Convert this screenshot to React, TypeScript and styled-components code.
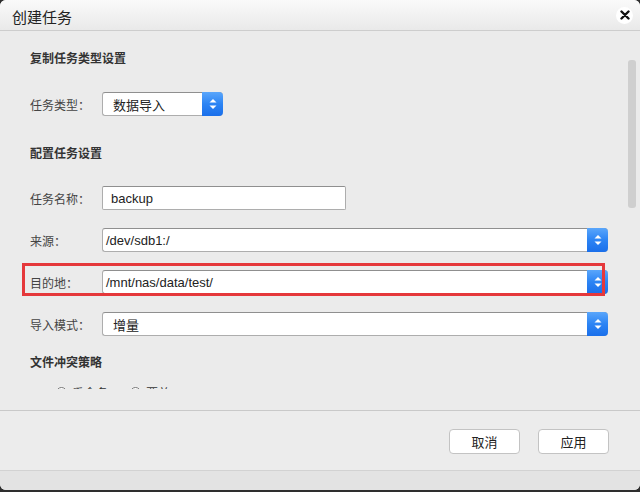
import styled, { createGlobalStyle } from "styled-components";

const GlobalStyle = createGlobalStyle`
  html, body {
    margin: 0;
    padding: 0;
    background: #2e2e2e;
  }
  body {
    font-family: "Liberation Sans", "Noto Sans CJK SC", sans-serif;
    color: #333;
  }
`;

type Field = {
  label: string;
  value: string;
  kind: "input" | "select";
  width?: number;
  indent?: number;
  highlight?: boolean;
};

const FIELDS: Field[] = [
  { label: "任务名称：", value: "backup", kind: "input", width: 244, indent: 8 },
  { label: "来源：", value: "/dev/sdb1:/", kind: "select", indent: 3 },
  { label: "目的地：", value: "/mnt/nas/data/test/", kind: "select", indent: 3, highlight: true },
  { label: "导入模式：", value: "增量", kind: "select", indent: 10 },
];

function SpinArrows() {
  return (
    <svg width="8" height="12" viewBox="0 0 8 12">
      <path d="M4 1 L7.5 4.6 H0.5 Z" fill="#fff" />
      <path d="M4 11 L7.5 7.4 H0.5 Z" fill="#fff" />
    </svg>
  );
}

function Select({ value, width, indent }: { value: string; width?: number; indent?: number }) {
  return (
    <SelectBox $width={width}>
      <FieldText $indent={indent ?? 5}>{value}</FieldText>
      <ArrowButton>
        <SpinArrows />
      </ArrowButton>
    </SelectBox>
  );
}

function App() {
  return (
    <>
      <GlobalStyle />
      <Dialog>
        <TitleBar>
          <Title>创建任务</Title>
          <CloseButton aria-label="close">
            <svg width="10" height="10" viewBox="0 0 10 10">
              <path d="M1.5 1.5 L8.5 8.5 M8.5 1.5 L1.5 8.5" stroke="#111" strokeWidth="2.4" strokeLinecap="round" />
            </svg>
          </CloseButton>
        </TitleBar>

        <Body>
          <ScrollArea>
            <Heading $top={17}>复制任务类型设置</Heading>
            <Row $top={24}>
              <Label>任务类型：</Label>
              <Select value="数据导入" width={121} indent={10} />
            </Row>

            <Heading $top={27}>配置任务设置</Heading>
            {FIELDS.map((f, i) => (
              <Row key={f.label} $top={i === 0 ? 23 : 18}>
                <Label>{f.label}</Label>
                {f.kind === "input" ? (
                  <InputBox $width={f.width}>
                    <FieldText $indent={f.indent ?? 5}>{f.value}</FieldText>
                  </InputBox>
                ) : (
                  <Select value={f.value} indent={f.indent} />
                )}
                {f.highlight && <Highlight />}
              </Row>
            ))}

            <Heading $top={16}>文件冲突策略</Heading>
            <RadioRow>
              <RadioOption>
                <RadioDot />
                重命名
              </RadioOption>
              <RadioOption>
                <RadioDot />
                覆盖
              </RadioOption>
            </RadioRow>
          </ScrollArea>
          <ScrollThumb />
        </Body>

        <Footer>
          <FooterButton>取消</FooterButton>
          <FooterButton>应用</FooterButton>
        </Footer>
        <BottomStrip />
      </Dialog>
    </>
  );
}

const Dialog = styled.div`
  width: 640px;
  height: 490px;
  display: flex;
  flex-direction: column;
  background: #ebebeb;
  border-radius: 6px;
  overflow: hidden;
`;

const TitleBar = styled.div`
  height: 30px;
  flex-shrink: 0;
  display: flex;
  align-items: center;
  justify-content: space-between;
  padding: 0 7px 0 12px;
  background: linear-gradient(#fafafa, #e9e9e9);
  border-bottom: 1px solid #cdcdcd;
`;

const Title = styled.div`
  font-family: "Noto Sans CJK SC", sans-serif;
  font-size: 15px;
  color: #222;
  padding-top: 2px;
`;

const CloseButton = styled.div`
  width: 17px;
  height: 17px;
  border-radius: 50%;
  background: #fff;
  display: flex;
  align-items: center;
  justify-content: center;
`;

const Body = styled.div`
  position: relative;
  height: 379px;
  flex-shrink: 0;
  border-bottom: 1px solid #c9c9c9;
`;

const ScrollArea = styled.div`
  height: 358px;
  overflow: hidden;
  padding: 0 32px 0 30px;
  display: flex;
  flex-direction: column;
`;

const ScrollThumb = styled.div`
  position: absolute;
  right: 4px;
  top: 29px;
  width: 8px;
  height: 148px;
  border-radius: 3px;
  background: #cfcfcf;
`;

const Heading = styled.div<{ $top: number }>`
  margin-top: ${(p) => p.$top}px;
  height: 20px;
  line-height: 20px;
  flex-shrink: 0;
  font-family: "Noto Sans CJK SC", sans-serif;
  font-size: 12px;
  font-weight: 700;
  color: #333;
`;

const Row = styled.div<{ $top: number }>`
  position: relative;
  margin-top: ${(p) => p.$top}px;
  height: 24px;
  flex-shrink: 0;
  display: flex;
  align-items: center;
`;

const Label = styled.div`
  width: 72px;
  flex-shrink: 0;
  font-family: "Noto Sans CJK SC", sans-serif;
  font-size: 12px;
  color: #444;
`;

const InputBox = styled.div<{ $width?: number }>`
  box-sizing: border-box;
  height: 24px;
  width: ${(p) => (p.$width ? `${p.$width}px` : "auto")};
  flex: ${(p) => (p.$width ? "0 0 auto" : "1")};
  background: #fff;
  border: 1px solid #adadad;
  border-top-color: #8f8f8f;
  border-radius: 2px;
  display: flex;
  align-items: center;
`;

const SelectBox = styled.div<{ $width?: number }>`
  box-sizing: border-box;
  height: 24px;
  width: ${(p) => (p.$width ? `${p.$width}px` : "auto")};
  flex: ${(p) => (p.$width ? "0 0 auto" : "1")};
  background: #fff;
  border: 1px solid #adadad;
  border-top-color: #8f8f8f;
  border-right: none;
  border-radius: 3px 4px 4px 3px;
  display: flex;
  align-items: center;
`;

const FieldText = styled.div<{ $indent: number }>`
  flex: 1;
  padding-left: ${(p) => p.$indent}px;
  font-family: "Liberation Sans", "Noto Sans CJK SC", sans-serif;
  font-size: 13px;
  color: #222;
  white-space: nowrap;
`;

const ArrowButton = styled.div`
  width: 21px;
  height: 24px;
  margin: -1px 0;
  flex-shrink: 0;
  border-radius: 0 4px 4px 0;
  background: linear-gradient(#5aa6fb, #2c84f4 50%, #1a6fea);
  display: flex;
  align-items: center;
  justify-content: center;
`;

const Highlight = styled.div`
  position: absolute;
  left: -8px;
  top: -7px;
  right: 3px;
  bottom: -2px;
  border: 3px solid #e5383b;
  pointer-events: none;
`;

const RadioRow = styled.div`
  margin-top: 12px;
  padding-left: 26px;
  display: flex;
  gap: 22px;
  flex-shrink: 0;
`;

const RadioOption = styled.div`
  display: flex;
  align-items: center;
  gap: 5px;
  font-family: "Noto Sans CJK SC", sans-serif;
  font-size: 12px;
  color: #333;
`;

const RadioDot = styled.span`
  box-sizing: border-box;
  width: 11px;
  height: 11px;
  border-radius: 50%;
  border: 1px solid #777;
  background: #fff;
`;

const Footer = styled.div`
  height: 59px;
  flex-shrink: 0;
  display: flex;
  align-items: center;
  justify-content: flex-end;
  gap: 18px;
  padding-right: 31px;
  background: #ececec;
  border-bottom: 1px solid #d2d2d2;
`;

const FooterButton = styled.div`
  box-sizing: border-box;
  width: 71px;
  height: 25px;
  margin-top: 2px;
  display: flex;
  align-items: center;
  justify-content: center;
  background: #fff;
  border: 1px solid #c3c3c3;
  border-radius: 4px;
  font-family: "Noto Sans CJK SC", sans-serif;
  font-size: 13px;
  color: #222;
`;

const BottomStrip = styled.div`
  flex: 1;
  background: #e3e3e3;
`;

export default App;
